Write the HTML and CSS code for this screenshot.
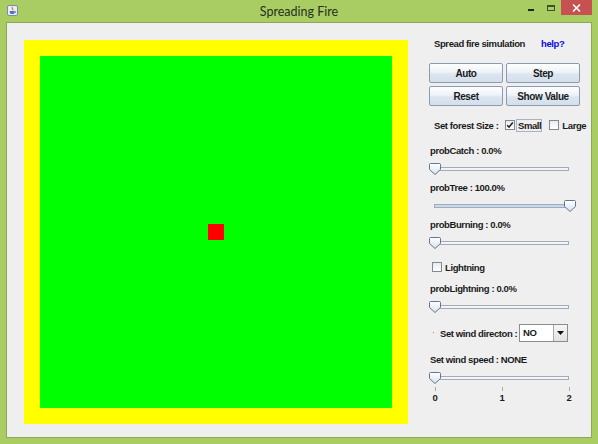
FILE: index.html
```html
<!DOCTYPE html>
<html>
<head>
<meta charset="utf-8">
<title>Spreading Fire</title>
<link rel="stylesheet" href="styles.css">
</head>
<body>
<div class="window">
  <div class="titlebar">
    <div class="tb-left">
      <svg class="appicon" width="11" height="11" viewBox="0 0 11 11">
        <rect x="0.5" y="0.5" width="10" height="10" rx="1.5" fill="#e9eef5" stroke="#7d8da6"/>
        <path d="M5.5 1.8 C4 3.3 7 3.8 5.5 5.4" stroke="#e07020" stroke-width="1.1" fill="none"/>
        <path d="M2.8 6 H7.6 V7.4 C7.6 8.6 6.6 9 5.2 9 C3.8 9 2.8 8.6 2.8 7.4 Z" fill="#4a78b8"/>
        <path d="M7.6 6.4 H8.6 V7.6 H7.6" stroke="#4a78b8" fill="none" stroke-width="0.8"/>
      </svg>
    </div>
    <div class="title">Spreading Fire</div>
    <div class="controls">
      <span class="ctl-min"></span>
      <span class="ctl-max"></span>
      <span class="ctl-close">
        <svg width="9" height="8" viewBox="0 0 9 8"><path d="M1 0.5 L8 7.5 M8 0.5 L1 7.5" stroke="#ffffff" stroke-width="1.6"/></svg>
      </span>
    </div>
  </div>
  <div class="frame">
    <div class="canvas-area">
      <svg class="forest" width="384" height="384" viewBox="0 0 384 384">
        <rect x="0" y="0" width="384" height="384" fill="#ffff00"/>
        <rect x="16" y="16" width="352" height="352" fill="#00ff00"/>
        <rect x="184" y="184" width="16" height="16" fill="#ff0000"/>
      </svg>
    </div>
    <div class="panel">
      <div class="row-title">
        <span class="sim-label">Spread fire simulation</span><span class="help">help?</span>
      </div>
      <div class="buttons">
        <div class="btn">Auto</div>
        <div class="btn">Step</div>
        <div class="btn">Reset</div>
        <div class="btn">Show Value</div>
      </div>
      <div class="row-forest">
        <span class="forest-label">Set forest Size :</span>
        <span class="check checked"><svg width="8" height="8" viewBox="0 0 8 8"><path d="M1.2 4.2 L3 6.2 L6.8 1.5" stroke="#1a1a1a" stroke-width="1.5" fill="none"/></svg></span>
        <span class="focus-label">Small</span>
        <span class="check check-large"></span>
        <span class="large-label">Large</span>
      </div>

      <div class="label first">probCatch : 0.0%</div>
      <div class="slider">
        <div class="track"></div>
        <svg class="thumb" style="left:0px" width="12" height="12" viewBox="0 0 12 12"><defs><linearGradient id="tg1" x1="0" y1="0" x2="0" y2="1"><stop offset="0" stop-color="#ffffff"/><stop offset="1" stop-color="#d6e2ef"/></linearGradient></defs><path d="M1.5 0.5 H10.5 Q11.5 0.5 11.5 1.5 V6.5 L6 11.5 L0.5 6.5 V1.5 Q0.5 0.5 1.5 0.5 Z" fill="url(#tg1)" stroke="#66768c"/></svg>
      </div>

      <div class="label">probTree : 100.0%</div>
      <div class="slider">
        <div class="track"><div class="fill" style="width:100%"></div></div>
        <svg class="thumb" style="left:135px" width="12" height="12" viewBox="0 0 12 12"><path d="M1.5 0.5 H10.5 Q11.5 0.5 11.5 1.5 V6.5 L6 11.5 L0.5 6.5 V1.5 Q0.5 0.5 1.5 0.5 Z" fill="url(#tg1)" stroke="#66768c"/></svg>
      </div>

      <div class="label">probBurning : 0.0%</div>
      <div class="slider">
        <div class="track"></div>
        <svg class="thumb" style="left:0px" width="12" height="12" viewBox="0 0 12 12"><path d="M1.5 0.5 H10.5 Q11.5 0.5 11.5 1.5 V6.5 L6 11.5 L0.5 6.5 V1.5 Q0.5 0.5 1.5 0.5 Z" fill="url(#tg1)" stroke="#66768c"/></svg>
      </div>

      <div class="row-lightning">
        <span class="check"></span>
        <span class="lightning-label">Lightning</span>
      </div>

      <div class="label lightning">probLightning : 0.0%</div>
      <div class="slider">
        <div class="track"></div>
        <svg class="thumb" style="left:0px" width="12" height="12" viewBox="0 0 12 12"><path d="M1.5 0.5 H10.5 Q11.5 0.5 11.5 1.5 V6.5 L6 11.5 L0.5 6.5 V1.5 Q0.5 0.5 1.5 0.5 Z" fill="url(#tg1)" stroke="#66768c"/></svg>
      </div>

      <div class="row-wind">
        <span class="dot"></span>
        <span class="wind-label">Set wind directon :</span>
        <div class="combo">
          <span class="combo-value">NO</span>
          <span class="combo-arrow"><svg width="7" height="4" viewBox="0 0 7 4"><path d="M0 0 H7 L3.5 4 Z" fill="#111111"/></svg></span>
        </div>
      </div>

      <div class="label speed">Set wind speed : NONE</div>
      <div class="slider">
        <div class="track"></div>
        <svg class="thumb" style="left:0px" width="12" height="12" viewBox="0 0 12 12"><path d="M1.5 0.5 H10.5 Q11.5 0.5 11.5 1.5 V6.5 L6 11.5 L0.5 6.5 V1.5 Q0.5 0.5 1.5 0.5 Z" fill="url(#tg1)" stroke="#66768c"/></svg>
      </div>
      <div class="ticks">
        <span class="tick"></span><span class="tick"></span><span class="tick"></span>
      </div>
      <div class="tick-labels">
        <span>0</span><span>1</span><span>2</span>
      </div>
    </div>
  </div>
</div>
</body>
</html>
```

FILE: styles.css
```css
html, body {
  margin: 0;
  padding: 0;
  background: #a9cd62;
}

.window {
  width: 598px;
  height: 444px;
  background: #a9cd62;
  display: flex;
  flex-direction: column;
  overflow: hidden;
  font-family: "Liberation Sans", Arial, sans-serif;
}

/* ---------- title bar ---------- */
.titlebar {
  height: 22px;
  display: grid;
  grid-template-columns: 1fr auto 1fr;
  align-items: start;
}

.tb-left {
  display: flex;
}

.appicon {
  display: block;
  margin: 5px 0 0 7px;
}

.title {
  font-family: Lato, "Liberation Sans", sans-serif;
  font-size: 12.5px;
  line-height: 23px;
  color: #27301f;
}

.controls {
  justify-self: end;
  display: flex;
  align-items: flex-start;
  padding-right: 6px;
}

.ctl-min {
  width: 6px;
  height: 2px;
  background: #1f2a14;
  margin-top: 9px;
  margin-right: 13px;
}

.ctl-max {
  box-sizing: border-box;
  width: 8px;
  height: 6px;
  border: 1px solid #3e4f2a;
  border-top-width: 2px;
  margin-top: 5px;
  margin-right: 6px;
}

.ctl-close {
  width: 31px;
  height: 15px;
  background: #c75050;
  display: flex;
  align-items: center;
  justify-content: center;
}

.ctl-close svg {
  display: block;
}

/* ---------- frame ---------- */
.frame {
  flex: 1;
  margin: 0 6px 6px 6px;
  border: 1px solid #8aa75a;
  background: #efefef;
  display: flex;
  align-items: flex-start;
}

.canvas-area {
  padding: 17px 0 0 17px;
}

.forest {
  display: block;
}

/* ---------- control panel ---------- */
.panel {
  margin-left: 21px;
  width: 162px;
  padding-top: 14px;
  display: flex;
  flex-direction: column;
  font-size: 9.5px;
  font-weight: bold;
  letter-spacing: -0.4px;
  color: #1b1b1b;
}

.row-title {
  height: 14px;
  line-height: 14px;
  display: flex;
  padding-left: 5px;
}

.sim-label {
  width: 107px;
}

.help {
  color: #0a0ae6;
}

.buttons {
  margin-top: 12px;
  display: grid;
  grid-template-columns: 74px 74px;
  grid-auto-rows: 20px;
  gap: 3px;
}

.btn {
  box-sizing: border-box;
  border: 1px solid #8d9bb0;
  border-radius: 2px;
  background: linear-gradient(#fdfeff 0%, #eef3f8 45%, #dce6f0 55%, #d3dfeb 100%);
  display: flex;
  align-items: center;
  justify-content: center;
  font-size: 10px;
}

.row-forest {
  margin-top: 12px;
  height: 14px;
  display: flex;
  align-items: center;
  padding-left: 5px;
}

.forest-label {
  width: 71px;
}

.check {
  box-sizing: border-box;
  width: 10px;
  height: 10px;
  border: 1px solid #7f8a96;
  background: linear-gradient(#e8ebee, #ffffff);
  display: flex;
  align-items: center;
  justify-content: center;
}

.check svg {
  display: block;
}

.focus-label {
  box-sizing: border-box;
  height: 13px;
  line-height: 11px;
  margin-left: 1px;
  padding: 0 0 0 1px;
  border: 1px solid #a6b3c2;
}

.check-large {
  margin-left: 7px;
}

.large-label {
  margin-left: 3px;
}

.label {
  height: 13px;
  line-height: 13px;
  padding-left: 1px;
  margin-top: 5.5px;
}

.label.first {
  margin-top: 12px;
}

.label.lightning {
  margin-top: 8.5px;
}

.label.speed {
  margin-top: 11.5px;
}

.slider {
  position: relative;
  height: 13px;
  margin-top: 5.5px;
  display: flex;
  align-items: center;
}

.track {
  box-sizing: border-box;
  margin-left: 5px;
  width: 135px;
  height: 4px;
  border: 1px solid #a2abb7;
  background: #f3f4f6;
}

.fill {
  height: 100%;
  background: #c4d8ef;
}

.thumb {
  position: absolute;
  top: 0.5px;
  display: block;
}

.row-lightning {
  margin-top: 11px;
  height: 13px;
  display: flex;
  align-items: center;
  padding-left: 3px;
}

.lightning-label {
  margin-left: 3px;
}

.row-wind {
  margin-top: 10px;
  height: 18px;
  display: flex;
  align-items: center;
  padding-left: 4px;
}

.dot {
  width: 1px;
  height: 1px;
  background: #8a8a8a;
}

.wind-label {
  margin-left: 6px;
  width: 79px;
  padding-top: 2px;
}

.combo {
  box-sizing: border-box;
  width: 49px;
  height: 18px;
  border: 1px solid #8c8c8c;
  background: #ffffff;
  display: flex;
  align-items: stretch;
}

.combo-value {
  flex: 1;
  padding-left: 3px;
  display: flex;
  align-items: center;
}

.combo-arrow {
  width: 13px;
  border-left: 1px solid #a8a8a8;
  background: linear-gradient(#f6f6f6, #e2e2e2);
  display: flex;
  align-items: center;
  justify-content: center;
}

.combo-arrow svg {
  display: block;
}

.ticks {
  margin-top: 2px;
  height: 4px;
  display: flex;
  padding-left: 6px;
  gap: 66px;
}

.tick {
  width: 1px;
  height: 4px;
  background: #a9a9a9;
}

.tick-labels {
  margin-top: 1px;
  height: 12px;
  line-height: 12px;
  display: flex;
  padding-left: 2px;
  gap: 59px;
}

.tick-labels span {
  width: 8px;
  text-align: center;
}
```
